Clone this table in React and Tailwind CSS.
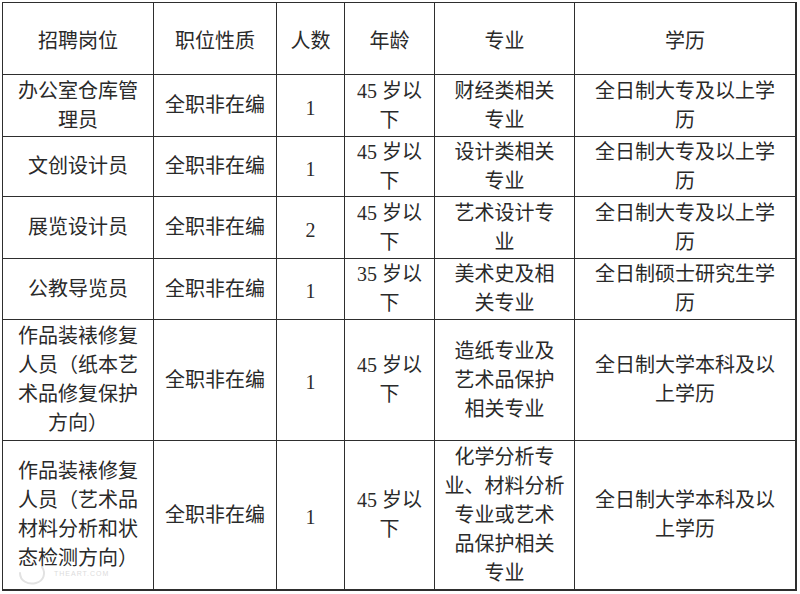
const rows = [
  {
    cells: [["招聘岗位"], ["职位性质"], ["人数"], ["年龄"], ["专业"], ["学历"]],
  },
  {
    cells: [
      ["办公室仓库管", "理员"],
      ["全职非在编"],
      ["1"],
      ["45 岁以", "下"],
      ["财经类相关", "专业"],
      ["全日制大专及以上学", "历"],
    ],
  },
  {
    cells: [
      ["文创设计员"],
      ["全职非在编"],
      ["1"],
      ["45 岁以", "下"],
      ["设计类相关", "专业"],
      ["全日制大专及以上学", "历"],
    ],
  },
  {
    cells: [
      ["展览设计员"],
      ["全职非在编"],
      ["2"],
      ["45 岁以", "下"],
      ["艺术设计专", "业"],
      ["全日制大专及以上学", "历"],
    ],
  },
  {
    cells: [
      ["公教导览员"],
      ["全职非在编"],
      ["1"],
      ["35 岁以", "下"],
      ["美术史及相", "关专业"],
      ["全日制硕士研究生学", "历"],
    ],
  },
  {
    cells: [
      ["作品装裱修复", "人员（纸本艺", "术品修复保护", "方向）"],
      ["全职非在编"],
      ["1"],
      ["45 岁以", "下"],
      ["造纸专业及", "艺术品保护", "相关专业"],
      ["全日制大学本科及以", "上学历"],
    ],
  },
  {
    cells: [
      ["作品装裱修复", "人员（艺术品", "材料分析和状", "态检测方向）"],
      ["全职非在编"],
      ["1"],
      ["45 岁以", "下"],
      ["化学分析专", "业、材料分析", "专业或艺术", "品保护相关", "专业"],
      ["全日制大学本科及以", "上学历"],
    ],
  },
];

export default function App() {
  return (
    <div className="relative w-[800px] h-[594px] bg-white overflow-hidden">
      {/* 招聘表格 */}
      <div
        className="ml-[2px] mt-[2px] w-fit grid grid-cols-[150px_122px_67px_89px_139px_220px] grid-rows-[71px_61px_59px_61px_60px_120px_148px] gap-px bg-[#2e2e2e] border-l border-t border-r-2 border-b-2 border-[#2e2e2e] text-[20px] leading-[29px] text-[#2a2a2a]"
        style={{ fontFamily: '"Liberation Serif", "Noto Sans CJK SC", serif' }}
      >
        {rows.map((row, ri) =>
          row.cells.map((lines, ci) => (
            <div
              key={ri + "-" + ci}
              className={
                "bg-white flex flex-col items-center justify-center text-center" +
                (ri === 0 || ci === 2 ? " pt-[5px]" : "")
              }
            >
              {lines.map((l, li) => (
                <span key={li} className="whitespace-nowrap">
                  {l}
                </span>
              ))}
            </div>
          ))
        )}
      </div>

      {/* 水印 */}
      <div className="absolute left-[14px] top-[553px] flex items-end gap-1 pointer-events-none">
        <svg width="36" height="34" viewBox="0 0 36 34" fill="none">
          <path
            d="M6 20c0 8 8 12 16 10s10-10 6-16"
            stroke="#e2e2e2"
            strokeWidth="2"
            strokeLinecap="round"
          />
        </svg>
        <span
          className="text-[7px] tracking-[1px] text-[#dcdcdc] mb-[8px]"
          style={{ fontFamily: '"Liberation Sans", sans-serif' }}
        >
          THEART.COM
        </span>
      </div>
    </div>
  );
}
